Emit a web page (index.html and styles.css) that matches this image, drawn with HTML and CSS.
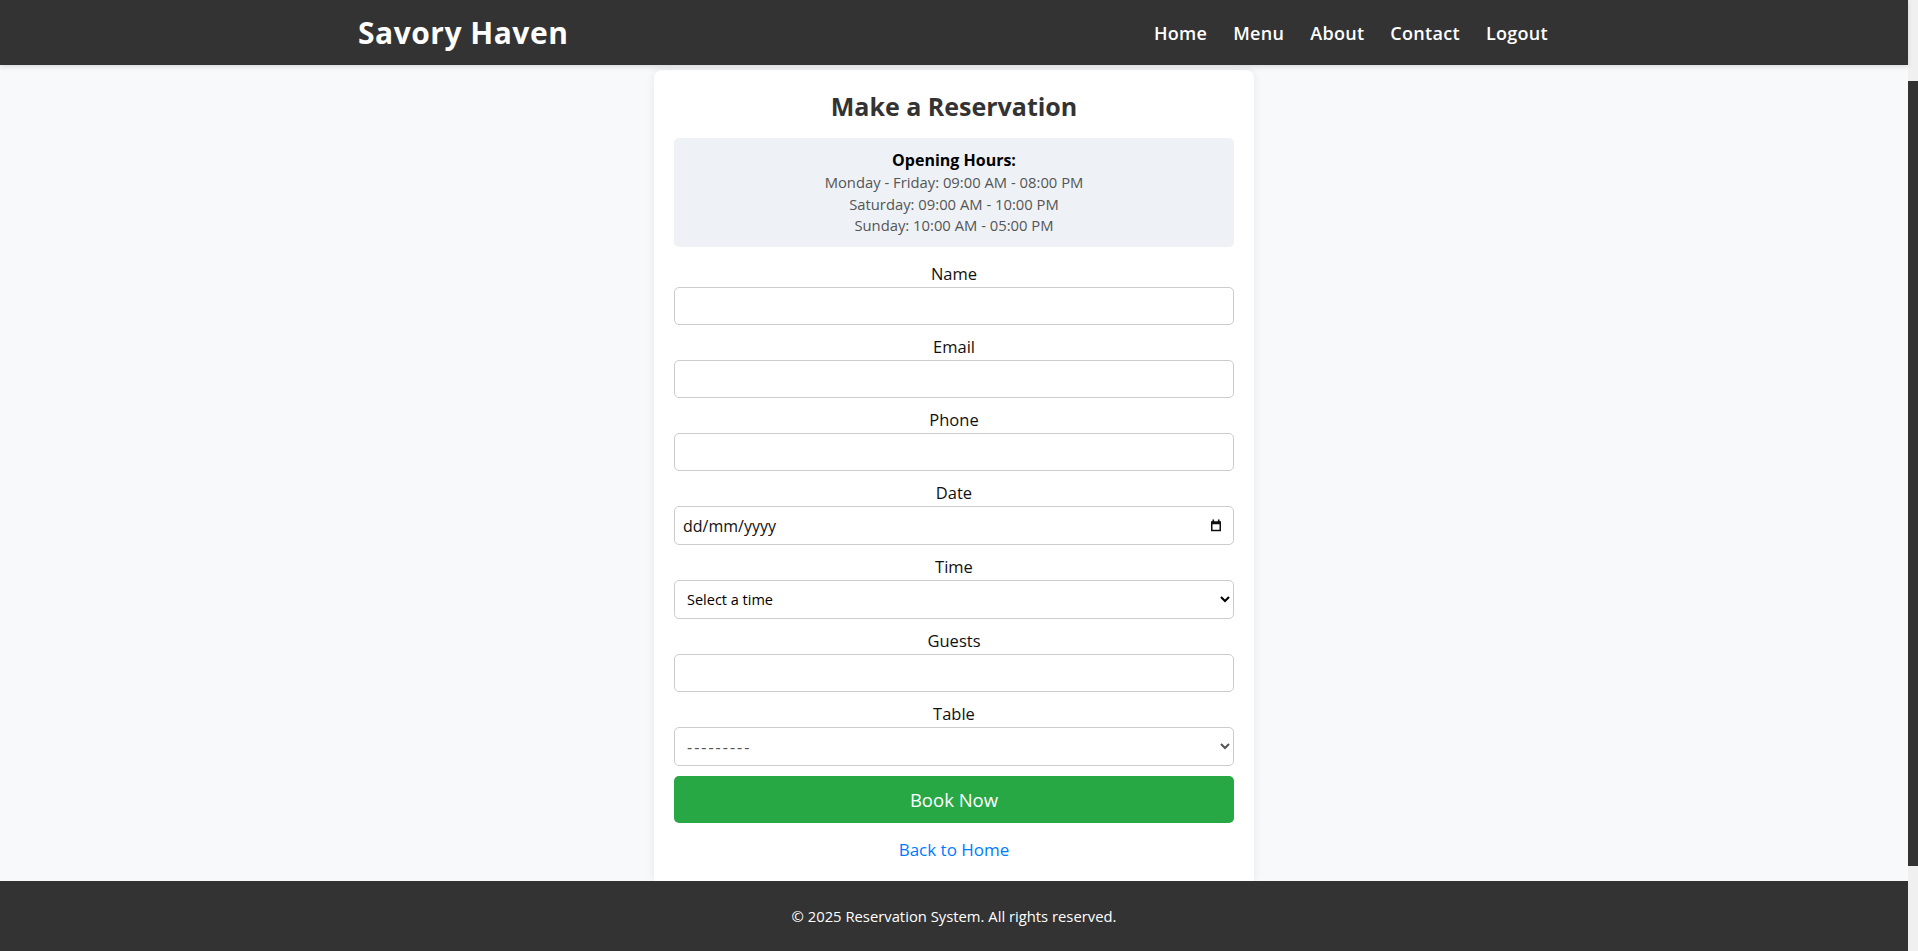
FILE: index.html
```html
<!DOCTYPE html>
<html lang="en-GB">
<head>
<meta charset="utf-8">
<title>Make a Reservation - Savory Haven</title>
<link rel="stylesheet" href="styles.css">
</head>
<body>
<div class="page">
  <header class="site-header">
    <div class="header-inner">
      <a class="brand" href="#">Savory Haven</a>
      <nav class="nav">
        <a href="#">Home</a>
        <a href="#">Menu</a>
        <a href="#">About</a>
        <a href="#">Contact</a>
        <a href="#">Logout</a>
      </nav>
    </div>
  </header>
  <main class="main">
    <section class="card">
      <h2 class="title">Make a Reservation</h2>
      <div class="hours">
        <div class="hours-title">Opening Hours:</div>
        <div class="hours-line">Monday - Friday: 09:00 AM - 08:00 PM</div>
        <div class="hours-line">Saturday: 09:00 AM - 10:00 PM</div>
        <div class="hours-line">Sunday: 10:00 AM - 05:00 PM</div>
      </div>
      <form class="form">
        <div class="group">
          <label for="name">Name</label>
          <input id="name" type="text" class="field">
        </div>
        <div class="group">
          <label for="email">Email</label>
          <input id="email" type="email" class="field">
        </div>
        <div class="group">
          <label for="phone">Phone</label>
          <input id="phone" type="text" class="field">
        </div>
        <div class="group">
          <label for="date">Date</label>
          <div class="field field-date">
            <input id="date" type="text" class="date-input" placeholder="dd/mm/yyyy">
            <svg class="cal-icon" width="12" height="13" viewBox="0 0 12 13" aria-hidden="true">
              <rect x="2.5" y="0.5" width="1.6" height="2.6" fill="#111"/>
              <rect x="7.9" y="0.5" width="1.6" height="2.6" fill="#111"/>
              <path d="M1 2.3h10v10H1z M2.5 5.2v5.6h7V5.2z" fill="#111" fill-rule="evenodd"/>
            </svg>
          </div>
        </div>
        <div class="group">
          <label for="time">Time</label>
          <select id="time" class="field field-select small">
            <option>Select a time</option>
          </select>
        </div>
        <div class="group">
          <label for="guests">Guests</label>
          <input id="guests" type="number" class="field">
        </div>
        <div class="group">
          <label for="table">Table</label>
          <select id="table" class="field field-select muted">
            <option>---------</option>
          </select>
        </div>
        <button type="button" class="btn">Book Now</button>
      </form>
      <a class="back" href="#">Back to Home</a>
    </section>
  </main>
  <footer class="site-footer">
    <p>© 2025 Reservation System. All rights reserved.</p>
  </footer>
</div>
</body>
</html>
```
FILE: styles.css
```css
* {
  box-sizing: border-box;
}
html {
  background: #f0f0f0;
}
body {
  margin: 0;
  padding-right: 10px;
  font-family: "Open Sans", "DejaVu Sans", sans-serif;
  color: #333;
}
/* scrollbar thumb drawn over the page edge (the browser hides its own) */
body::after {
  content: "";
  position: fixed;
  top: 81px;
  right: 0;
  width: 10px;
  height: 785px;
  background: #333;
}
.page {
  min-height: 100vh;
  display: flex;
  flex-direction: column;
  background: #f8f9fa;
}
.site-header {
  background: #333;
  height: 65px;
  box-shadow: 0 2px 5px rgba(0, 0, 0, 0.12);
  position: relative;
  z-index: 2;
}
.header-inner {
  max-width: 1192px;
  height: 100%;
  margin: 0 auto;
  display: flex;
  align-items: center;
  justify-content: space-between;
}
.brand {
  color: #fff;
  text-decoration: none;
  font-weight: 700;
  font-size: 30px;
  letter-spacing: 0.5px;
}
.nav {
  display: flex;
  gap: 26px;
  margin-right: 2px;
}
.nav a {
  color: #fff;
  text-decoration: none;
  font-weight: 600;
  font-size: 18px;
  letter-spacing: 0.3px;
}
.main {
  flex: 1;
  display: flex;
  justify-content: center;
  padding-top: 5px;
}
.card {
  width: 600px;
  background: #fff;
  border-radius: 8px 8px 0 0;
  box-shadow: 0 0 10px rgba(0, 0, 0, 0.08);
  padding: 18px 20px 19px;
  text-align: center;
}
.title {
  margin: 0 0 14px;
  font-size: 25px;
  line-height: 36px;
  font-weight: 700;
  color: #333;
}
.hours {
  background: #eef2f6;
  border-radius: 5px;
  padding: 10px;
  margin-bottom: 15px;
}
.hours-title {
  font-weight: 700;
  font-size: 16px;
  line-height: 24px;
  color: #000;
}
.hours-line {
  font-size: 14.8px;
  line-height: 21.7px;
  color: #555;
}
.group {
  margin-bottom: 10px;
}
.group label {
  display: block;
  font-size: 16.5px;
  line-height: 24px;
  margin-bottom: 1px;
  color: #111;
}
.field {
  display: block;
  width: 100%;
  height: 38px;
  padding: 8px 10px;
  border: 1px solid #ccc;
  border-radius: 5px;
  background: #fff;
  font-family: inherit;
  font-size: 16px;
  color: #222;
}
.field-date {
  height: 39px;
  padding: 0 11px 0 8px;
  display: flex;
  align-items: center;
}
.date-input {
  flex: 1;
  border: none;
  outline: none;
  padding: 0;
  font-family: inherit;
  font-size: 16px;
  color: #111;
  background: transparent;
}
.date-input::placeholder {
  color: #111;
}
.cal-icon {
  flex: none;
}
.field-select {
  padding: 0 8px;
  height: 39px;
}
.small {
  font-size: 14.5px;
  color: #000;
}
.muted {
  color: #555;
  letter-spacing: 2px;
}
.btn {
  display: block;
  width: 100%;
  height: 47px;
  margin-top: 3px;
  border: none;
  border-radius: 5px;
  background: #28a745;
  color: #fff;
  font-family: inherit;
  font-size: 18.5px;
  cursor: pointer;
}
.back {
  display: inline-block;
  margin-top: 15px;
  color: #007bff;
  text-decoration: none;
  font-size: 17px;
  line-height: 24px;
}
.site-footer {
  background: #333;
  color: #fff;
  height: 70px;
  display: flex;
  align-items: center;
  justify-content: center;
  position: relative;
  z-index: 2;
}
.site-footer p {
  margin: 0;
  font-size: 14.8px;
  font-weight: 500;
}
```
